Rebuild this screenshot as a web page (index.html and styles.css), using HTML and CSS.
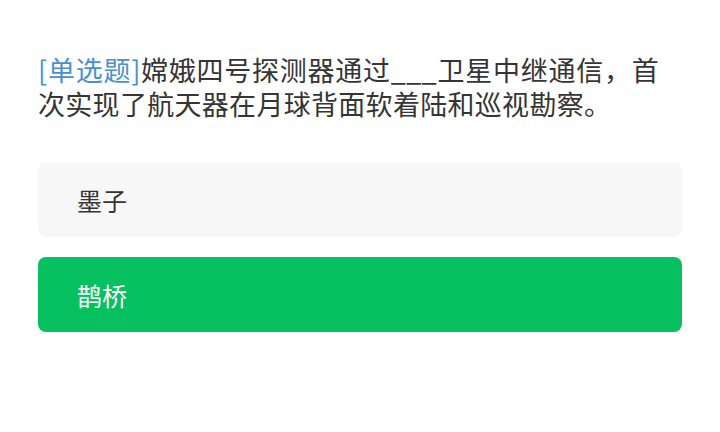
FILE: index.html
```html
<!DOCTYPE html>
<html lang="zh-CN">
<head>
<meta charset="utf-8">
<link rel="stylesheet" href="styles.css">
</head>
<body>
<div class="page">
  <p class="question"><span class="tag">[单选题]</span>嫦娥四号探测器通过___卫星中继通信，首次实现了航天器在月球背面软着陆和巡视勘察。</p>
  <div class="options">
    <div class="option">墨子</div>
    <div class="option selected">鹊桥</div>
  </div>
</div>
</body>
</html>
```
FILE: styles.css
```css
html, body {
  margin: 0;
  padding: 0;
  background: #ffffff;
}
body {
  font-family: "Noto Sans CJK SC", "Noto Sans", sans-serif;
  color: #353535;
}
.page {
  padding: 53px 38px 0 38px;
}
.question {
  margin: 0;
  width: 621px;
  font-size: 27px;
  line-height: 34px;
  letter-spacing: 0.3px;
  text-align: justify;
}
.tag {
  color: #4a90d0;
}
.options {
  margin-top: 41px;
  display: flex;
  flex-direction: column;
  gap: 20px;
}
.option {
  height: 75px;
  display: flex;
  align-items: center;
  padding-left: 39px;
  font-size: 25px;
  background: #f7f7f7;
  border-radius: 8px;
  color: #353535;
}
.option.selected {
  background: #07c160;
  color: #ffffff;
}
```
